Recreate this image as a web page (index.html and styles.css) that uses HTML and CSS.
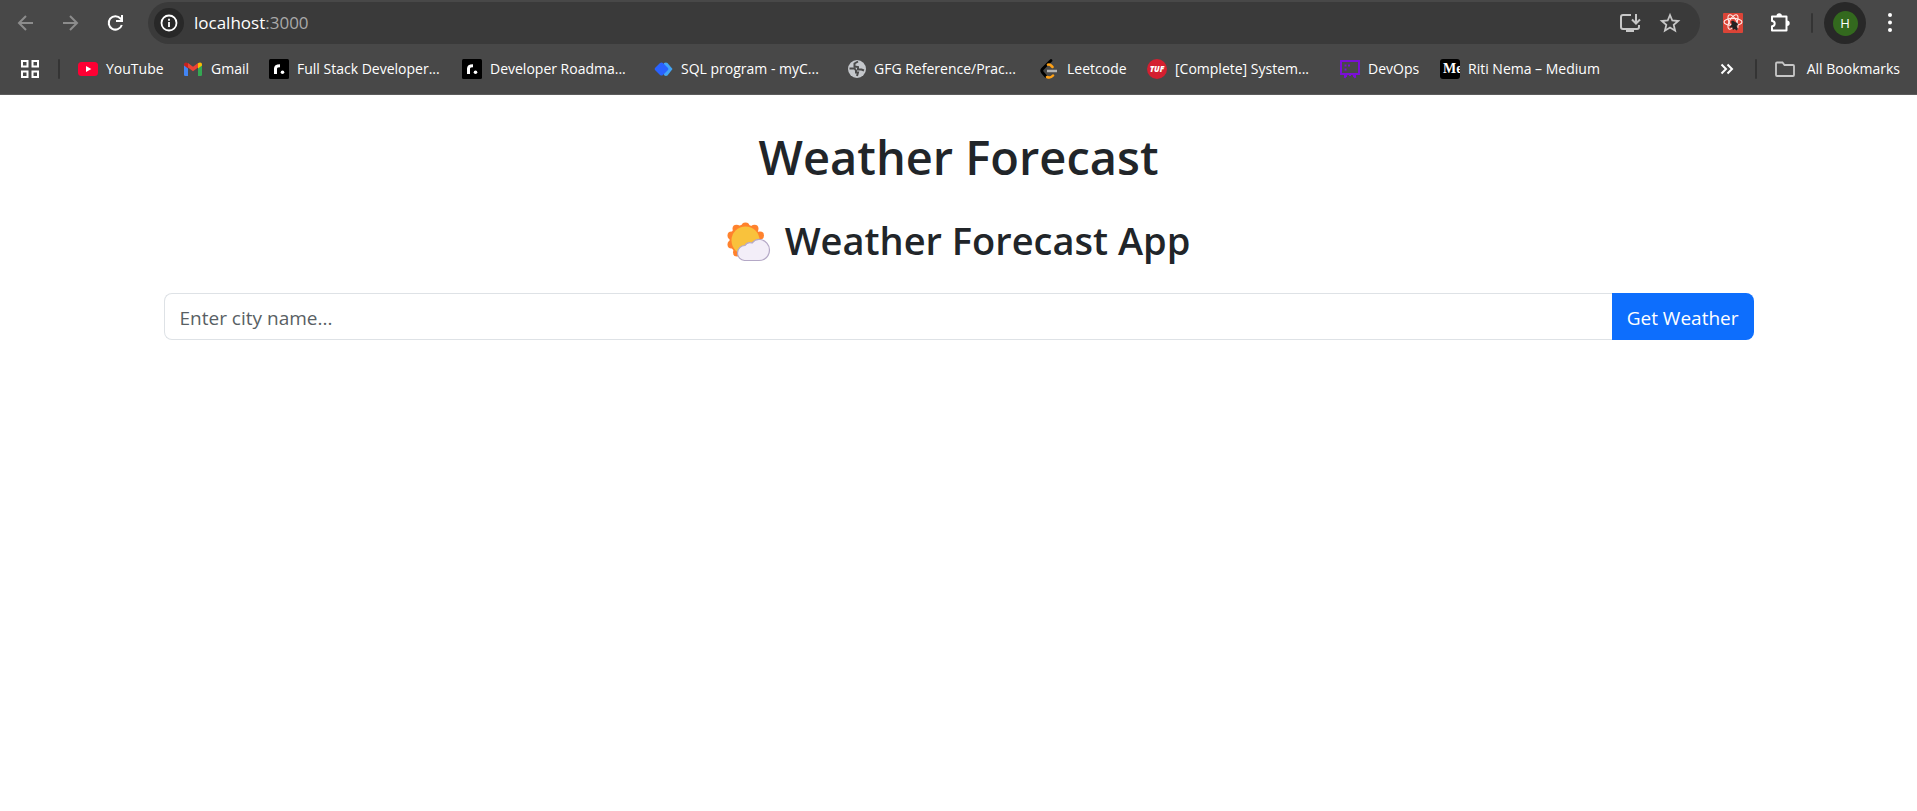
FILE: index.html
```
<!DOCTYPE html>
<html lang="en">
<head>
<meta charset="utf-8">
<title>Weather Forecast</title>
<link rel="stylesheet" href="styles.css">
</head>
<body>
<header class="browser">
  <div class="toolbar">
    <nav class="nav" aria-label="Navigation">
      <button class="icon-btn dim" aria-label="Back"><svg width="22" height="22" viewBox="0 0 22 22"><path d="M18 11H4M11 4l-7 7 7 7" fill="none" stroke="currentColor" stroke-width="2"/></svg></button>
      <button class="icon-btn dim" aria-label="Forward"><svg width="22" height="22" viewBox="0 0 22 22"><path d="M3 11h14M10 4l7 7-7 7" fill="none" stroke="currentColor" stroke-width="2"/></svg></button>
      <button class="icon-btn" aria-label="Reload"><svg width="22" height="22" viewBox="0 0 22 22"><path d="M16.800 13a6.700 6.700 0 1 1-1.300-6.500L17 8" fill="none" stroke="currentColor" stroke-width="2"/><path d="M17 3v6h-6" fill="none" stroke="currentColor" stroke-width="2"/></svg></button>
    </nav>
    <div class="omnibox">
      <button class="site-info" aria-label="Site information"><svg width="18" height="18" viewBox="0 0 18 18"><circle cx="9" cy="9" r="7.500" fill="none" stroke="currentColor" stroke-width="1.800"/><path d="M9 8v5M9 4.800v1.900" stroke="currentColor" stroke-width="1.800"/></svg></button>
      <div class="url">localhost<span class="port">:3000</span></div>
      <button class="icon-btn soft" aria-label="Install app"><svg width="22" height="22" viewBox="0 0 22 22"><path d="M12 3H4Q2 3 2 5v10q0 2 2 2h14q2 0 2-2v-2" fill="none" stroke="currentColor" stroke-width="2"/><path d="M7 17h8v3H7z" fill="currentColor"/><path d="M17 2v9M13 7.500l4 4 4-4" fill="none" stroke="currentColor" stroke-width="2"/></svg></button>
      <button class="icon-btn soft" aria-label="Bookmark this page"><svg width="22" height="22" viewBox="0 0 22 22"><path d="M11 3l2.300 5.500 5.900.500-4.500 3.900 1.400 5.800-5.100-3.100-5.100 3.100 1.400-5.800L2.800 9l5.900-.500z" fill="none" stroke="currentColor" stroke-width="1.800"/></svg></button>
    </div>
    <div class="extensions">
      <button class="icon-btn" aria-label="React developer tools"><svg width="22" height="22" viewBox="0 0 22 22"><rect x="1" y="1" width="20" height="20" rx="1" fill="#db4437"/><g fill="none" stroke="#ffe9e6" stroke-width="1.100"><ellipse cx="11" cy="10" rx="9" ry="3.600"/><ellipse cx="11" cy="10" rx="8" ry="3.600" transform="rotate(60 11 10)"/><ellipse cx="11" cy="10" rx="8" ry="3.600" transform="rotate(120 11 10)"/></g><path d="M9 9.500l2-1 2 1.500 2.500 1 .500 2-1.500 1 1.500 3-1.500 1.500-2-1.500-1.500 1-1-3-1.500 1-.500-2 2-1.500z" fill="#222"/></svg></button>
      <button class="icon-btn" aria-label="Extensions"><svg width="22" height="22" viewBox="0 0 22 22"><path d="M3 4.500h14.500v14H3v-4.300c3.600 0 3.600-5.200 0-5.200z" fill="none" stroke="currentColor" stroke-width="2" stroke-linejoin="round"/><path d="M7.500 4a2.700 2.700 0 0 1 5.400 0zM18 8.500a2.700 2.700 0 0 1 0 5.400z" fill="currentColor"/></svg></button>
    </div>
    <span class="divider"></span>
    <button class="profile" aria-label="Profile"><span class="avatar">H</span></button>
    <button class="icon-btn" aria-label="Menu"><svg width="22" height="22" viewBox="0 0 22 22" fill="currentColor"><circle cx="11" cy="3" r="2"/><circle cx="11" cy="10.500" r="2"/><circle cx="11" cy="18" r="2"/></svg></button>
  </div>
  <nav class="bookmarks" aria-label="Bookmarks">
    <button class="icon-btn" aria-label="Apps"><svg width="20" height="20" viewBox="0 0 20 20"><path d="M2 2h5.500v5.500H2zM12.500 2H18v5.500h-5.500zM2 12.500h5.500V18H2zM12.500 12.500H18V18h-5.500z" fill="none" stroke="currentColor" stroke-width="2"/></svg></button>
    <span class="divider"></span>
    <div class="links">
      <a class="bookmark" href="#"><svg width="20" height="20" viewBox="0 0 20 20"><rect y="3" width="20" height="14" rx="3.500" fill="#ff0033"/><path d="M8 7l5.300 3L8 13z" fill="#fff"/></svg><span>YouTube</span></a>
      <a class="bookmark" href="#"><svg width="20" height="20" viewBox="0 0 20 20"><path d="M1 5.500l4 3V17H2.200Q1 17 1 15.800z" fill="#4285f4"/><path d="M19 5.500l-4 3V17h2.800q1.200 0 1.200-1.200z" fill="#34a853"/><path d="M5 8.500V4l5 3.800L15 4v4.500l-5 3.800z" fill="#ea4335"/><path d="M15 4.200c2-1.500 4-.700 4 1.300v1l-4 3z" fill="#fbbc04"/><path d="M5 4.200C3 2.700 1 3.500 1 5.500v1l4 3z" fill="#c5221f"/></svg><span>Gmail</span></a>
      <a class="bookmark" href="#"><svg width="20" height="20" viewBox="0 0 20 20"><rect width="20" height="20" rx="1.500" fill="#000"/><path d="M6.500 15V9.500Q6.500 6.700 11 6.700" fill="none" stroke="#fff" stroke-width="3"/><circle cx="13.500" cy="13.300" r="1.800" fill="#fff"/></svg><span>Full Stack Developer...</span></a>
      <a class="bookmark" href="#"><svg width="20" height="20" viewBox="0 0 20 20"><rect width="20" height="20" rx="1.500" fill="#000"/><path d="M6.500 15V9.500Q6.500 6.700 11 6.700" fill="none" stroke="#fff" stroke-width="3"/><circle cx="13.500" cy="13.300" r="1.800" fill="#fff"/></svg><span>Developer Roadma...</span></a>
      <a class="bookmark" href="#"><svg width="20" height="20" viewBox="0 0 20 20"><path d="M11 4q2-1 3.500 0l5 6-5 6.500q-2 1-3.500-.500z" fill="#42a5f5"/><path d="M7 4q1.500-1 3 0l5 5q.8 1 0 2l-5 5q-1.500 1.200-3 0l-5-5q-.8-1 0-2z" fill="#2962ff"/></svg><span>SQL program - myC...</span></a>
      <a class="bookmark" href="#"><svg width="20" height="20" viewBox="0 0 20 20"><circle cx="11" cy="10" r="9" fill="#c4c7cb"/><path d="M12 2.500L8.500 4.500v3L12 8v2.500h3.500l2.500 1M3.500 9.500h5l1.500 2v2h2l-1 3.500" fill="none" stroke="#4a4a4a" stroke-width="2"/></svg><span>GFG Reference/Prac...</span></a>
      <a class="bookmark" href="#"><svg width="20" height="20" viewBox="0 0 20 20"><path d="M12 1.500L3.500 10q-1.500 1.800 0 3.500L7 17.500" fill="none" stroke="#000" stroke-width="2.800" stroke-linecap="round"/><path d="M9 5.700q1.500-.700 3 .800l1.500 1.500M8 18q3.500 1.500 6-1.500" fill="none" stroke="#ffa116" stroke-width="2.500" stroke-linecap="round"/><path d="M8 12h10" stroke="#b3b3b3" stroke-width="2.500"/></svg><span>Leetcode</span></a>
      <a class="bookmark" href="#"><span class="tuf">TUF</span><span>[Complete] System...</span></a>
      <a class="bookmark" href="#"><svg width="20" height="20" viewBox="0 0 20 20" fill="none" stroke="#7a0fd6" stroke-width="2"><path d="M1 2h18v13H1zM7 15l-2.500 4M10 15v2M13 15l2.500 4M4 17h3M13 17h3"/><path d="M4.500 6.500h2M8 6.500h2M4.500 10.500h2"/></svg><span>DevOps</span></a>
      <a class="bookmark" href="#"><span class="medium">Me</span><span>Riti Nema – Medium</span></a>
    </div>
    <button class="icon-btn more" aria-label="More bookmarks"><svg width="20" height="20" viewBox="0 0 20 20"><path d="M4.500 5.500L9 10l-4.500 4.500M10.500 5.500L15 10l-4.500 4.500" fill="none" stroke="currentColor" stroke-width="2"/></svg></button>
    <span class="divider"></span>
    <a class="bookmark all" href="#"><svg width="20" height="20" viewBox="0 0 20 20"><path d="M2 3.500h5.500l2 2.500H18q1 0 1 1v9q0 1-1 1H2q-1 0-1-1V4.500q0-1 1-1z" fill="none" stroke="#c7c7c7" stroke-width="1.800"/></svg><span>All Bookmarks</span></a>
  </nav>
</header>
<main class="page">
  <h1 class="title">Weather Forecast</h1>
  <h2 class="subtitle">
    <svg class="weather-icon" width="44" height="40" viewBox="0 0 44 40" aria-hidden="true">
      <g fill="#ff822d"><circle cx="18.500" cy="4.500" r="4"/><circle cx="27.500" cy="6.800" r="4"/><circle cx="33" cy="13.500" r="4"/><circle cx="9.500" cy="6.800" r="4"/><circle cx="4.500" cy="13.500" r="4"/><circle cx="4.500" cy="22.500" r="4"/><circle cx="10" cy="30.500" r="4"/><circle cx="18" cy="18" r="15.500"/></g>
      <circle cx="18.500" cy="18.500" r="14" fill="#f9c23c"/>
      <path d="M17.500 38.500a7.500 7.500 0 0 1-7-7.500c0-4.500 3.500-7.500 7.500-7.500 1.500-2.500 4-3.500 7-2.500 3-3.500 6-4 8.500-3.500 5 1 9 5 9 10.500 0 6-4.500 10.500-10.500 10.500z" fill="#f3eef8" stroke="#b4a8c6" stroke-width="1.200"/>
    </svg>
    <span>Weather Forecast App</span>
  </h2>
  <form class="search">
    <input class="city" type="text" placeholder="Enter city name..." aria-label="City name">
    <button class="submit" type="button">Get Weather</button>
  </form>
</main>
</body>
</html>
```
FILE: styles.css
```
* { box-sizing: border-box; }
body { margin: 0; background: #fff; color: #212529; font-family: "Open Sans", "Noto Sans", sans-serif; }
button { border: 0; padding: 0; background: none; color: inherit; font: inherit; }
svg { display: block; flex: none; }

.browser { background: #484848; color: #fff; border-bottom: 1px solid #5c5c5c; }
.toolbar { display: flex; align-items: center; height: 46px; padding: 0 16px 0 15px; }
.nav { display: flex; gap: 23px; margin-right: 21px; }
.icon-btn { display: flex; flex: none; }
.dim { color: #8c8c8c; }
.soft { color: #c7c7c7; }
.omnibox { display: flex; align-items: center; flex: 1; height: 42px; padding: 0 19px 0 6px; border-radius: 21px; background: #3a3a3a; }
.site-info { display: flex; align-items: center; justify-content: center; width: 30px; height: 30px; border-radius: 50%; background: #282828; }
.url { flex: 1; margin-left: 10px; font-size: 17px; line-height: 24px; }
.port { color: #a9a9a9; }
.omnibox .icon-btn { margin-left: 18px; }
.extensions { display: flex; gap: 25px; margin: 0 20px 0 22px; }
.divider { flex: none; width: 2px; height: 20px; border-radius: 1px; background: #343434; }
.profile { display: flex; align-items: center; justify-content: center; width: 42px; height: 42px; margin: 0 13px 0 11px; border-radius: 50%; background: #282828; }
.avatar { width: 25px; height: 25px; border-radius: 50%; background: #33691e; font-size: 13px; line-height: 25px; text-align: center; }

.bookmarks { display: flex; align-items: center; height: 48px; padding: 0 17px 2px 20px; font-size: 14px; line-height: 20px; }
.bookmarks .divider { margin: 0 18px; }
.links { display: grid; flex: 1; grid-template-columns: 105px 86px 193px 191px 193px 193px 108px 193px 100px 170px; }
.bookmark { display: flex; align-items: center; gap: 8px; color: #fff; text-decoration: none; white-space: nowrap; }
.more { margin-left: 12px; }
.all { gap: 12px; }
.tuf { width: 20px; height: 20px; border-radius: 50%; background: #d41f30; font-size: 8px; font-style: italic; font-weight: 800; text-align: center; }
.medium { width: 20px; height: 20px; padding-left: 3px; overflow: hidden; border-radius: 3px; background: #000; font: 700 14px/20px "Liberation Serif", serif; }

.page { max-width: 1650px; margin: 0 auto; padding: 30px; text-align: center; }
.title { margin: 0 0 24px; font-size: 47px; font-weight: 600; line-height: 64px; }
.subtitle { display: flex; align-items: center; justify-content: center; gap: 14px; margin: 0 0 26px; font-size: 38px; font-weight: 600; line-height: 54px; }
.weather-icon { margin-top: 4px; }
.search { display: flex; }
.city { flex: 1; min-width: 0; height: 47px; padding: 2px 15px 0; border: 1px solid #dee2e6; border-right: 0; border-radius: 8px 0 0 8px; color: #212529; font: inherit; font-size: 19px; }
.city::placeholder { color: #595f64; opacity: 1; }
.submit { padding: 2px 15px 0; border-radius: 0 8px 8px 0; background: #0d6efd; color: #fff; font-size: 19px; }
```
